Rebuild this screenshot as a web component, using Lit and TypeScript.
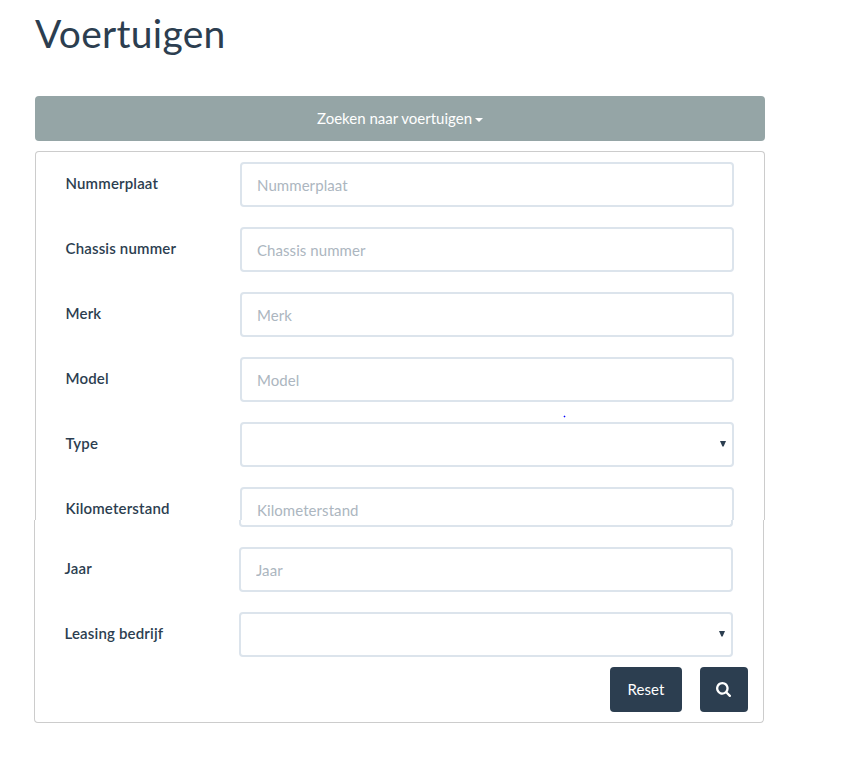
import { LitElement, html, css } from "lit";
import { customElement } from "lit/decorators.js";

type Field = { label: string; select?: boolean };

const UPPER: Field[] = [
  { label: "Nummerplaat" },
  { label: "Chassis nummer" },
  { label: "Merk" },
  { label: "Model" },
  { label: "Type", select: true },
  { label: "Kilometerstand" },
];
const LOWER: Field[] = [{ label: "Jaar" }, { label: "Leasing bedrijf", select: true }];

@customElement("app-root")
class AppRoot extends LitElement {
  static styles = css`
    :host {
      display: block;
      box-sizing: border-box;
      height: 778px;
      padding: 12px 79px 0 35px;
      overflow: hidden;
      background: #fff;
      color: #2c3e50;
      font: 15px/21px Lato, "Liberation Sans", sans-serif;
    }
    *, *::before, *::after { box-sizing: border-box; }
    h1 { margin: 0 0 41px; font-size: 39px; line-height: 43px; font-weight: 400; letter-spacing: 0.28px; }
    button {
      display: flex;
      align-items: center;
      justify-content: center;
      height: 45px;
      padding: 0;
      border: 0;
      border-radius: 4px;
      background: #2c3e50;
      color: #fff;
      font: inherit;
    }
    .toggle { width: 730px; margin-bottom: 10px; background: #95a5a6; }
    .caret {
      margin: 2px 0 0 3px;
      border: 4px solid transparent;
      border-top-color: #fff;
      border-bottom: 0;
    }
    .panel { width: 730px; border: 1px solid #ccc; padding: 0 30px 0 29px; }
    .upper {
      height: 369px;
      padding-top: 10px;
      border-bottom: 0;
      border-radius: 4px 4px 0 0;
      overflow: hidden;
    }
    .lower {
      height: 203px;
      margin-left: -1px;
      padding-right: 15px;
      border-top: 0;
      border-radius: 0 0 4px 4px;
    }
    .row { display: flex; height: 45px; margin-bottom: 20px; }
    .label { width: 175px; padding: 11px 0 0 0.5px; font-weight: 600; letter-spacing: 0.17px; }
    .control { position: relative; width: 494px; height: 45px; }
    input, select {
      display: block;
      width: 100%;
      height: 45px;
      margin: 0;
      padding: 0 15px;
      border: 2px solid #dce4ec;
      border-radius: 4px;
      background: #fff;
      color: #2c3e50;
      font: inherit;
      letter-spacing: 0.07px;
      outline: 0;
      appearance: none;
    }
    input::placeholder { color: #acb6c0; opacity: 1; }
    .arrow { position: absolute; right: 8px; top: 19px; width: 6px; height: 6px; fill: #2c3e50; }
    .edge {
      width: 494px;
      height: 7px;
      margin: 0 0 20px 175px;
      border: 2px solid #dce4ec;
      border-top: 0;
      border-radius: 0 0 4px 4px;
    }
    .actions { display: flex; justify-content: flex-end; gap: 18px; margin-top: -10px; }
    .reset { width: 72px; letter-spacing: 0.05px; }
    .search { width: 48px; padding-right: 1px; }
    .glass { width: 15px; height: 15px; fill: #fff; }
    .dot { position: absolute; left: 564px; top: 416px; width: 1px; height: 1px; background: #00f; box-shadow: 1px 0 #b8b8ff, -1px 0 #b8b8ff, 0 1px #b8b8ff, 0 -1px #b8b8ff; }
  `;

  row({ label, select }: Field) {
    return html`<div class="row">
      <label class="label">${label}</label>
      <div class="control">
        ${select
          ? html`<select></select><svg class="arrow" viewBox="0 0 6 6"><path d="M0 0h6L3.600 5.500H2.400z" /></svg>`
          : html`<input placeholder=${label} />`}
      </div>
    </div>`;
  }

  render() {
    return html`
      <h1>Voertuigen</h1>
      <button class="toggle">Zoeken naar voertuigen<span class="caret"></span></button>
      <div class="panel upper">${UPPER.map((f) => this.row(f))}</div>
      <div class="panel lower">
        <div class="edge"></div>
        ${LOWER.map((f) => this.row(f))}
        <div class="actions">
          <button class="reset">Reset</button>
          <button class="search" aria-label="Zoeken">
            <svg class="glass" viewBox="0 0 1664 1664">
              <path d="M1152 704q0-185-131.500-316.500T704 256 387.500 387.500 256 704t131.500 316.500T704 1152t316.500-131.500T1152 704zm512 832q0 52-38 90t-90 38q-54 0-90-38l-343-342q-179 124-399 124-143 0-273.500-55.500t-225-150-150-225T0 704t55.500-273.500 150-225 225-150T704 0t273.500 55.500 225 150 150 225T1408 704q0 220-124 399l343 343q37 37 37 90z" />
            </svg>
          </button>
        </div>
      </div>
      <span class="dot"></span>
    `;
  }
}
